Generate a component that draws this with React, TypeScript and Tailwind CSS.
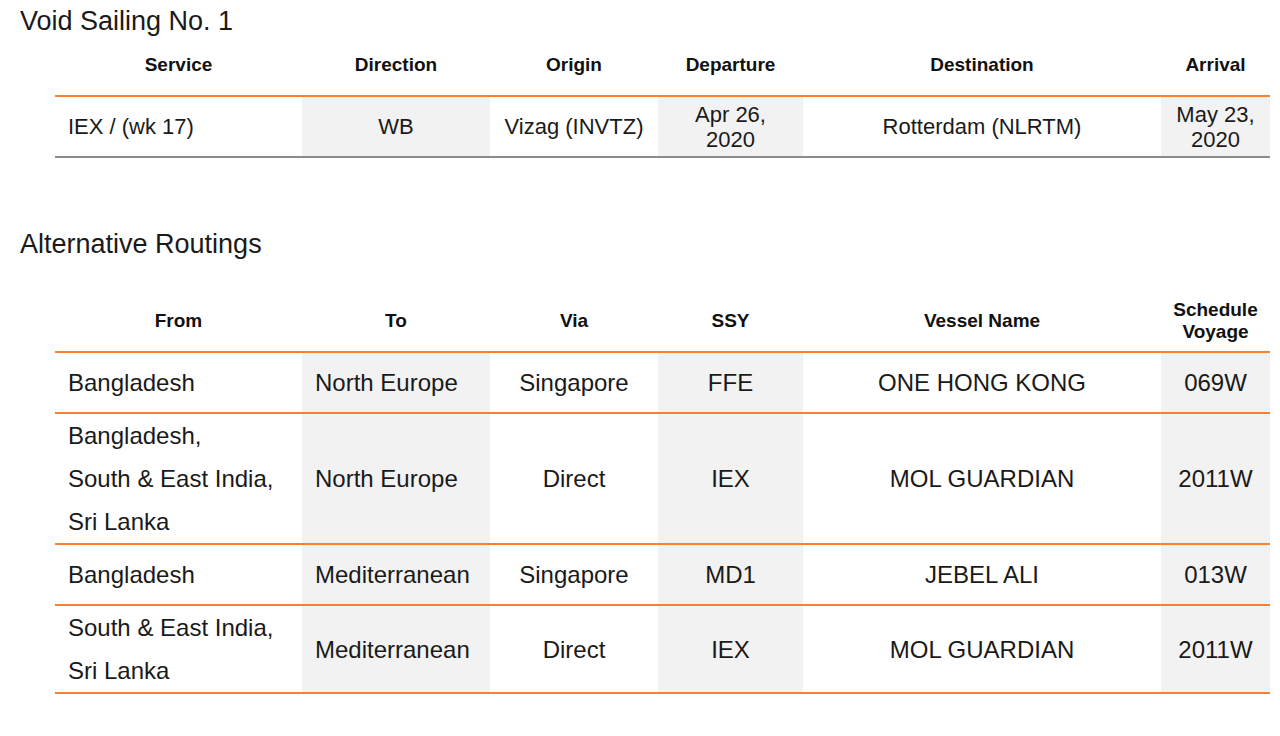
import React from "react";

type Col = { w: string; align: "left" | "center"; shade?: boolean };

const cols: Col[] = [
  { w: "w-[247px]", align: "left" },
  { w: "w-[188px]", align: "center", shade: true },
  { w: "w-[168px]", align: "center" },
  { w: "w-[145px]", align: "center", shade: true },
  { w: "w-[358px]", align: "center" },
  { w: "w-[109px]", align: "center", shade: true },
];

const voidSailing = {
  head: ["Service", "Direction", "Origin", "Departure", "Destination", "Arrival"],
  row: ["IEX / (wk 17)", "WB", "Vizag (INVTZ)", "Apr 26,\n2020", "Rotterdam (NLRTM)", "May 23,\n2020"],
};

const routings: string[][] = [
  ["Bangladesh", "North Europe", "Singapore", "FFE", "ONE HONG KONG", "069W"],
  ["Bangladesh,\nSouth & East India,\nSri Lanka", "North Europe", "Direct", "IEX", "MOL GUARDIAN", "2011W"],
  ["Bangladesh", "Mediterranean", "Singapore", "MD1", "JEBEL ALI", "013W"],
  ["South & East India,\nSri Lanka", "Mediterranean", "Direct", "IEX", "MOL GUARDIAN", "2011W"],
];

const routingHead = ["From", "To", "Via", "SSY", "Vessel Name", "Schedule\nVoyage"];

function Lines({ text }: { text: string }) {
  return (
    <>
      {text.split("\n").map((l, i) => (
        <div key={i}>{l}</div>
      ))}
    </>
  );
}

function Head({ labels, h }: { labels: string[]; h: string }) {
  return (
    <thead>
      <tr className="border-b-2 border-[#ff7f2a]">
        {labels.map((l, i) => (
          <th
            key={i}
            className={`${h} align-middle text-center font-bold text-[19px] leading-[22px] text-[#111] pb-[2px]`}
          >
            <Lines text={l} />
          </th>
        ))}
      </tr>
    </thead>
  );
}

export default function App() {
  return (
    <main className="w-[1280px] h-[736px] bg-white text-[#1a1a1a] font-['Liberation_Sans',Arial,sans-serif] overflow-hidden">
      <h1 className="pt-[5px] pl-[20px] text-[27px] leading-[32px] font-normal">Void Sailing No. 1</h1>

      <table className="ml-[55px] w-[1215px] table-fixed border-collapse">
        <colgroup>
          {cols.map((c, i) => (
            <col key={i} className={c.w} />
          ))}
        </colgroup>
        <Head labels={voidSailing.head} h="h-[59px]" />
        <tbody>
          <tr className="border-b-2 border-[#8c8c8c]">
            {voidSailing.row.map((v, i) => (
              <td
                key={i}
                className={`h-[61px] align-middle text-[22px] leading-[25px] ${
                  cols[i].shade ? "bg-[#f2f2f2]" : ""
                } ${i === 0 ? "text-left pl-[13px]" : "text-center"}`}
              >
                <Lines text={v} />
              </td>
            ))}
          </tr>
        </tbody>
      </table>

      <h2 className="mt-[70px] pl-[20px] text-[27px] leading-[32px] font-normal">Alternative Routings</h2>

      <table className="mt-[32px] ml-[55px] w-[1215px] table-fixed border-collapse">
        <colgroup>
          {cols.map((c, i) => (
            <col key={i} className={c.w} />
          ))}
        </colgroup>
        <Head labels={routingHead} h="h-[60px]" />
        <tbody>
          {routings.map((r, ri) => (
            <tr key={ri} className="border-b-2 border-[#ff7f2a]">
              {r.map((v, i) => (
                <td
                  key={i}
                  className={`h-[61px] py-0 align-middle text-[24px] leading-[43px] ${
                    cols[i].shade ? "bg-[#f2f2f2]" : ""
                  } ${i <= 1 ? "text-left pl-[13px]" : "text-center"}`}
                >
                  <Lines text={v} />
                </td>
              ))}
            </tr>
          ))}
        </tbody>
      </table>
    </main>
  );
}
